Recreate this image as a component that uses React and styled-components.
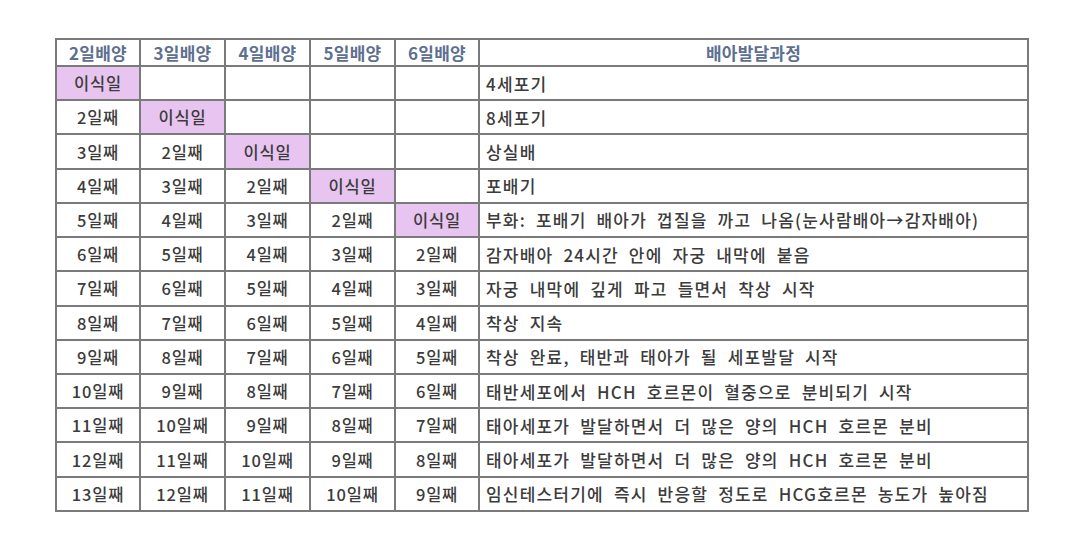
import React from "react";
import styled, { createGlobalStyle } from "styled-components";

const GlobalStyle = createGlobalStyle`
  html, body {
    margin: 0;
    padding: 0;
    background: #fff;
  }
  body {
    font-family: "Noto Sans CJK KR", "Noto Sans", sans-serif;
  }
`;

const Page = styled.div`
  width: 1077px;
  height: 547px;
  padding: 38px 0 0 55px;
  box-sizing: border-box;
`;

const Table = styled.table`
  width: 972px;
  height: 474px;
  border-collapse: collapse;
  table-layout: fixed;
  border: 2px solid #7a7a7a;
`;

const Col = styled.col`
  width: ${(p) => p.$w}px;
`;

const HeadCell = styled.th`
  border: 2px solid #7a7a7a;
  color: #5d7090;
  font-size: 17px;
  font-weight: 700;
  text-align: center;
  padding: 0;
  letter-spacing: 0.2px;
`;

const Cell = styled.td`
  border: 2px solid #7a7a7a;
  color: #3c3c3c;
  font-size: 16.5px;
  font-weight: 500;
  text-align: center;
  padding: 0;
  letter-spacing: 0.8px;
  background: ${(p) => (p.$mark ? "#e8c4f0" : "#fff")};
`;

const DescCell = styled.td`
  border: 2px solid #7a7a7a;
  color: #3c3c3c;
  font-size: 17px;
  font-weight: 500;
  text-align: left;
  padding: 0 0 0 6px;
  letter-spacing: 1.2px;
  word-spacing: 5px;
  white-space: nowrap;
`;

const descriptions = [
  "4세포기",
  "8세포기",
  "상실배",
  "포배기",
  "부화: 포배기 배아가 껍질을 까고 나옴(눈사람배아→감자배아)",
  "감자배아 24시간 안에 자궁 내막에 붙음",
  "자궁 내막에 깊게 파고 들면서 착상 시작",
  "착상 지속",
  "착상 완료, 태반과 태아가 될 세포발달 시작",
  "태반세포에서 HCH 호르몬이 혈중으로 분비되기 시작",
  "태아세포가 발달하면서 더 많은 양의 HCH 호르몬 분비",
  "태아세포가 발달하면서 더 많은 양의 HCH 호르몬 분비",
  "임신테스터기에 즉시 반응할 정도로 HCG호르몬 농도가 높아짐",
];

const days = [2, 3, 4, 5, 6];

function DayCell({ day }) {
  if (day < 1) return <Cell />;
  if (day === 1) return <Cell $mark>이식일</Cell>;
  return <Cell>{day}일째</Cell>;
}

export default function App() {
  return (
    <Page>
      <GlobalStyle />
      <Table>
        <colgroup>
          <Col $w={84} />
          <Col $w={85} />
          <Col $w={85} />
          <Col $w={85} />
          <Col $w={84} />
          <Col $w={549} />
        </colgroup>
        <thead>
          <tr>
            {days.map((d) => (
              <HeadCell key={d}>{d}일배양</HeadCell>
            ))}
            <HeadCell>배아발달과정</HeadCell>
          </tr>
        </thead>
        <tbody>
          {descriptions.map((text, i) => {
            const row = i + 1;
            return (
              <tr key={i}>
                {days.map((d, c) => (
                  <DayCell key={d} day={row - c} />
                ))}
                <DescCell>{text}</DescCell>
              </tr>
            );
          })}
        </tbody>
      </Table>
    </Page>
  );
}
